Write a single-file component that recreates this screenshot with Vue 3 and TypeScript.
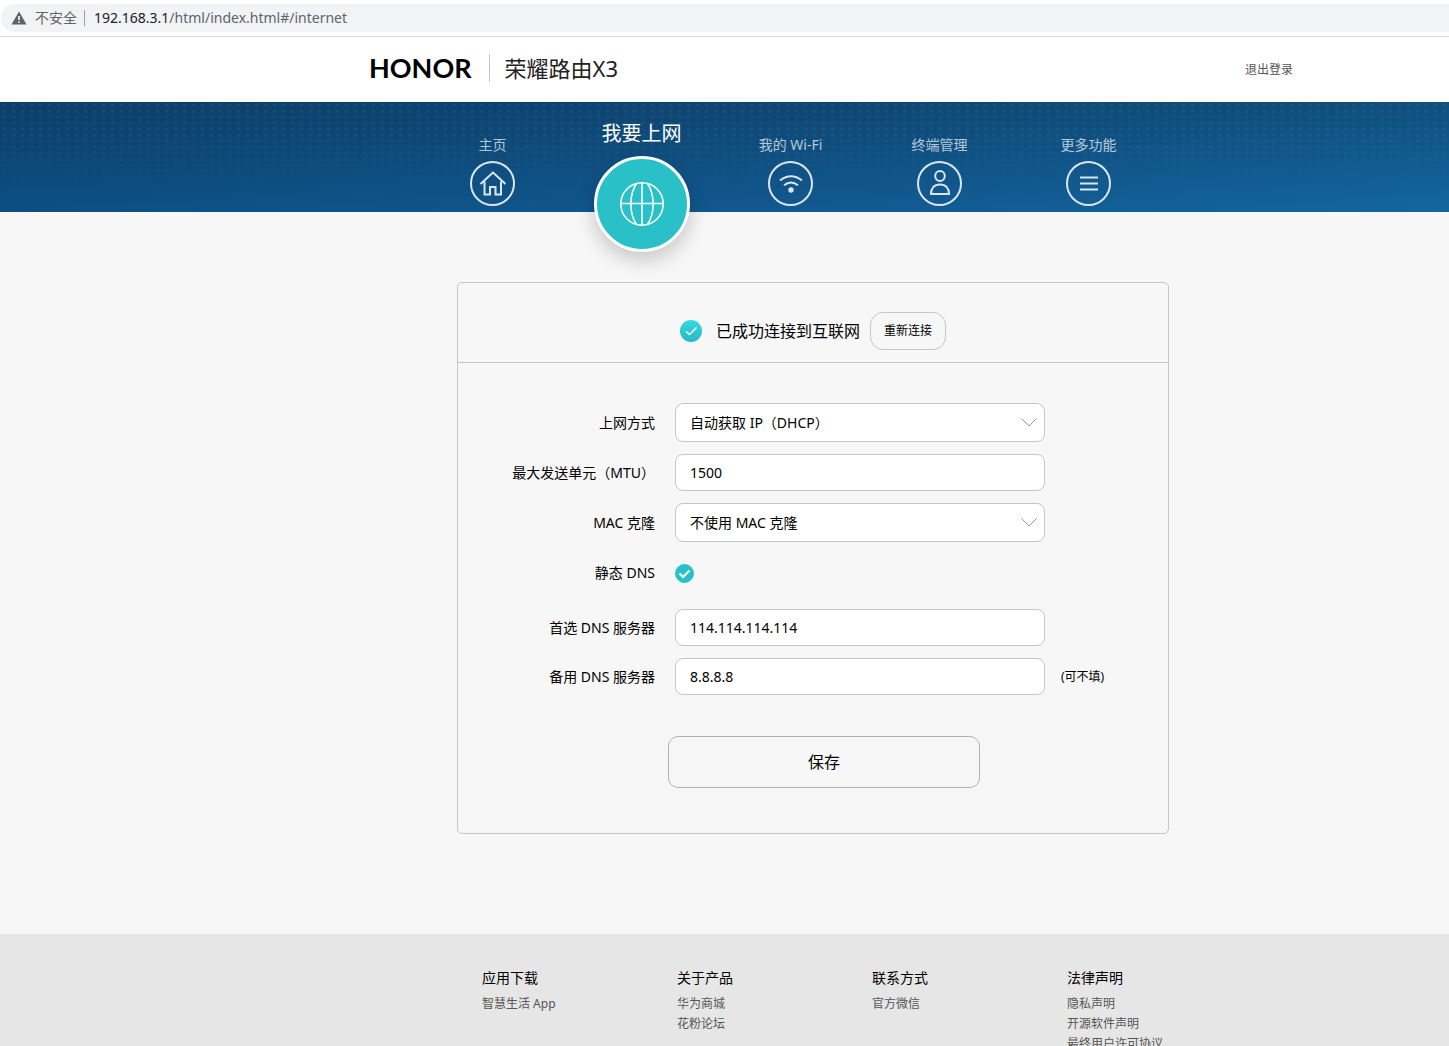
<script setup lang="ts">
import { ref } from 'vue'

interface NavItem {
  id: string
  label: string
  active?: boolean
}

interface FooterColumn {
  title: string
  links: string[]
}

const navItems: NavItem[] = [
  { id: 'home', label: '主页' },
  { id: 'internet', label: '我要上网', active: true },
  { id: 'wifi', label: '我的 Wi-Fi' },
  { id: 'device', label: '终端管理' },
  { id: 'more', label: '更多功能' },
]

const footerColumns: FooterColumn[] = [
  { title: '应用下载', links: ['智慧生活 App'] },
  { title: '关于产品', links: ['华为商城', '花粉论坛'] },
  { title: '联系方式', links: ['官方微信'] },
  { title: '法律声明', links: ['隐私声明', '开源软件声明', '最终用户许可协议'] },
]

const mode = ref('dhcp')
const mtu = ref('1500')
const macClone = ref('none')
const staticDns = ref(true)
const primaryDns = ref('114.114.114.114')
const secondaryDns = ref('8.8.8.8')
</script>

<template>
  <div class="window">
    <div class="toolbar">
      <div class="address">
        <svg class="warn" viewBox="0 0 16 14" aria-hidden="true">
          <path d="M8 0.5 15.5 13.5H0.5Z" fill="#5f6368" />
          <path d="M7.2 5h1.6v4H7.2zM7.2 10.2h1.6v1.6H7.2z" fill="#fff" />
        </svg>
        <span class="insecure">不安全</span>
        <span class="url"><b>192.168.3.1</b>/html/index.html#/internet</span>
      </div>
    </div>

    <div class="viewport">
      <header class="header">
        <div class="header-inner">
          <div class="brand">
            <span class="logo">HONOR</span>
            <h1 class="product">荣耀路由X3</h1>
          </div>
          <a class="logout" href="#/logout">退出登录</a>
        </div>
      </header>

      <nav class="banner">
        <div class="nav">
          <a
            v-for="item in navItems"
            :key="item.id"
            class="nav-item"
            :class="{ active: item.active }"
            :href="'#/' + item.id"
          >
            <span class="nav-label">{{ item.label }}</span>
            <span class="nav-circle">
              <svg v-if="item.id === 'home'" class="nav-icon" viewBox="0 0 44 44">
                <path d="M9.500 22 22 10.500 34.500 22M13.500 19.500v13h5.500v-7.500h5.500v7.500h5.500v-13" />
              </svg>
              <svg v-else-if="item.id === 'internet'" class="nav-icon globe" viewBox="0 0 44 44">
                <circle cx="22" cy="22" r="21.200" />
                <path d="M22 1v42M1 21.500h42M16.500 1.500c-7.500 11-7.500 30 0 41M27.500 1.500c7.500 11 7.500 30 0 41" />
              </svg>
              <svg v-else-if="item.id === 'wifi'" class="nav-icon" viewBox="0 0 44 44">
                <path d="M11 18.500q11-8.500 22 0M15 23.300q7-5.500 14 0" />
                <circle class="solid" cx="22" cy="28" r="2.700" />
              </svg>
              <svg v-else-if="item.id === 'device'" class="nav-icon" viewBox="0 0 44 44">
                <ellipse cx="22" cy="14" rx="4.800" ry="5" />
                <path d="M13 32c0-6 3.500-9.500 9-9.500s9 3.500 9 9.500z" />
              </svg>
              <svg v-else class="nav-icon" viewBox="0 0 44 44">
                <path d="M13 15.500h18M13 21.500h18M13 27.500h18" />
              </svg>
            </span>
          </a>
        </div>
      </nav>

      <main class="main">
        <section class="card">
          <div class="status">
            <svg class="status-icon" viewBox="0 0 22 22" aria-hidden="true">
              <defs>
                <linearGradient id="ok" x1="0" y1="0" x2="0" y2="1">
                  <stop offset="0" stop-color="#32dbde" />
                  <stop offset="1" stop-color="#27b7c4" />
                </linearGradient>
              </defs>
              <circle cx="11" cy="11" r="11" fill="url(#ok)" />
              <path d="M6 11.500 9.500 14.500 16.500 7.500" fill="none" stroke="#fff" stroke-width="1.500" />
            </svg>
            <span class="status-text">已成功连接到互联网</span>
            <button class="reconnect" type="button">重新连接</button>
          </div>

          <form class="form" @submit.prevent>
            <div class="row">
              <label for="mode">上网方式</label>
              <div class="select">
                <select id="mode" v-model="mode">
                  <option value="dhcp">自动获取 IP（DHCP）</option>
                </select>
                <svg class="arrow" viewBox="0 0 16 9"><path d="M0.500 0.500 8 8 15.500 0.500" /></svg>
              </div>
            </div>
            <div class="row">
              <label for="mtu">最大发送单元（MTU）</label>
              <input id="mtu" v-model="mtu" class="text" type="text" />
            </div>
            <div class="row">
              <label for="mac">MAC 克隆</label>
              <div class="select">
                <select id="mac" v-model="macClone">
                  <option value="none">不使用 MAC 克隆</option>
                </select>
                <svg class="arrow" viewBox="0 0 16 9"><path d="M0.500 0.500 8 8 15.500 0.500" /></svg>
              </div>
            </div>
            <div class="row check-row">
              <label for="static-dns">静态 DNS</label>
              <span class="check">
                <input id="static-dns" v-model="staticDns" type="checkbox" />
                <svg v-if="staticDns" viewBox="0 0 19 19"><path d="M4.500 9.500 8 13 14.500 6.500" /></svg>
              </span>
            </div>
            <div class="row">
              <label for="dns1">首选 DNS 服务器</label>
              <input id="dns1" v-model="primaryDns" class="text" type="text" />
            </div>
            <div class="row">
              <label for="dns2">备用 DNS 服务器</label>
              <input id="dns2" v-model="secondaryDns" class="text" type="text" />
              <span class="hint">(可不填)</span>
            </div>
            <button class="save" type="submit">保存</button>
          </form>
        </section>
      </main>

      <footer class="footer">
        <div class="footer-inner">
          <div v-for="column in footerColumns" :key="column.title" class="footer-column">
            <h2>{{ column.title }}</h2>
            <a v-for="link in column.links" :key="link" href="#/internet">{{ link }}</a>
          </div>
        </div>
      </footer>
    </div>
  </div>
</template>

<style>
body {
  margin: 0;
}
</style>

<style scoped>
* {
  box-sizing: border-box;
}

.window {
  display: flex;
  flex-direction: column;
  height: 100vh;
  background: #fff;
  color: #000;
  font: 400 14px/20px "Noto Sans", "Noto Sans CJK SC", sans-serif;
}

a {
  color: inherit;
  text-decoration: none;
}

button,
input,
select {
  margin: 0;
  color: inherit;
  font: inherit;
}

/* Browser address bar */
.toolbar {
  flex: none;
  padding: 4px 0 4px 1px;
  border-bottom: 1px solid #dadce0;
}

.address {
  display: flex;
  align-items: center;
  height: 28px;
  padding-left: 10px;
  border-radius: 14px 0 0 14px;
  background: #f1f3f4;
  color: #5f6368;
  white-space: nowrap;
}

.warn {
  width: 16px;
  height: 14px;
  margin-right: 8px;
}

.insecure {
  padding-right: 7px;
}

.url {
  padding-left: 9px;
  border-left: 1px solid #9aa0a6;
  line-height: 16px;
}

.url b {
  color: #202124;
  font-weight: inherit;
}

.viewport {
  flex: 1;
  min-height: 0;
  overflow-y: auto;
  scrollbar-width: none;
  background: #f7f7f7;
}

/* The sections share one axis, set right of the window centre */
.header,
.banner,
.main,
.footer {
  display: flex;
  justify-content: center;
  padding-left: 177px;
}

.header {
  background: #fff;
}

.header-inner {
  display: flex;
  align-items: center;
  width: 960px;
  height: 65px;
  padding-left: 36px;
}

.brand {
  display: flex;
  align-items: center;
  padding-bottom: 4px;
}

.logo {
  padding-right: 17px;
  font: 700 27px/28px Lato, sans-serif;
}

.product {
  margin: 0;
  padding-left: 15px;
  border-left: 1px solid #c4c4c4;
  color: #222;
  font-size: 22px;
  font-weight: inherit;
  line-height: 28px;
}

.logout {
  margin-left: auto;
  color: #555;
  font-size: 12px;
}

.banner {
  position: relative;
  height: 110px;
  background:
    linear-gradient(to bottom, rgba(8, 24, 40, 0.3), rgba(8, 24, 40, 0)),
    linear-gradient(to right, #0d4f83, #11588f 50%, #1366a1);
}

.banner::before {
  content: "";
  position: absolute;
  inset: 0;
  background: radial-gradient(ellipse 3px 2px at center, rgba(80, 150, 185, 0.18), transparent) 0 0 / 9px 6px;
  mask-image: linear-gradient(to bottom, #000 30%, transparent 80%);
}

.nav {
  position: relative;
  z-index: 1;
  display: grid;
  grid-template-columns: repeat(5, 149px);
  width: 790px;
}

.nav-item {
  display: flex;
  flex-direction: column;
  align-items: center;
  gap: 6px;
  padding-top: 33px;
  color: rgba(255, 255, 255, 0.7);
  white-space: nowrap;
}

.nav-circle {
  display: flex;
  flex: none;
  align-items: center;
  justify-content: center;
  width: 45px;
  height: 45px;
  border: 2px solid #dbe5ee;
  border-radius: 50%;
}

.nav-icon {
  flex: none;
  width: 44px;
  height: 44px;
  fill: none;
  stroke: #dbe5ee;
  stroke-width: 2;
}

.nav-icon .solid {
  fill: #dbe5ee;
  stroke: none;
}

.nav-item.active {
  gap: 8px;
  height: 150px;
  padding-top: 18px;
  color: #fff;
  font-size: 20px;
  line-height: 28px;
}

.active .nav-circle {
  width: 96px;
  height: 96px;
  border: 3px solid #fff;
  background: #29c0c8;
  box-shadow: 0 8px 20px rgba(0, 0, 0, 0.2);
}

.globe {
  stroke: #fff;
  stroke-width: 1.6;
}

.main {
  padding-top: 70px;
  padding-bottom: 100px;
}

.card {
  width: 712px;
  border: 1px solid #c6c6c6;
  border-radius: 5px;
}

.status {
  display: flex;
  align-items: center;
  justify-content: center;
  padding: 29px 0 12px;
  border-bottom: 1px solid #c6c6c6;
}

.status-icon {
  width: 22px;
  height: 22px;
  margin-right: 14px;
}

.status-text {
  margin-right: 10px;
  font-size: 16px;
}

.reconnect {
  width: 76px;
  height: 38px;
  padding: 0;
  border: 1px solid #c6c6c6;
  border-radius: 13px;
  background: transparent;
  font-size: 12px;
}

.form {
  display: flex;
  flex-direction: column;
  gap: 12px;
  padding: 40px 0 45px;
}

.row {
  display: grid;
  grid-template-columns: 197px 370px auto;
  column-gap: 20px;
  align-items: center;
  justify-content: start;
}

.row label {
  text-align: right;
  white-space: nowrap;
}

.text,
.select select {
  display: block;
  width: 100%;
  padding: 0 14px;
  border: 1px solid #c6c6c6;
  border-radius: 8px;
  outline: none;
  background: #fff;
}

.text {
  height: 37px;
}

.select {
  position: relative;
}

.select select {
  height: 39px;
  appearance: none;
}

.arrow {
  position: absolute;
  top: 15px;
  right: 8px;
  width: 16px;
  height: 9px;
  fill: none;
  stroke: #999;
  pointer-events: none;
}

.check-row {
  height: 38px;
  margin-bottom: 5px;
}

.check {
  position: relative;
  width: 19px;
  height: 19px;
}

.check input {
  display: block;
  width: 19px;
  height: 19px;
  border: 1px solid #29c0c8;
  border-radius: 50%;
  appearance: none;
}

.check input:checked {
  background: #29c0c8;
}

.check svg {
  position: absolute;
  inset: 0;
  fill: none;
  stroke: #fff;
  stroke-width: 2;
  pointer-events: none;
}

.hint {
  margin-left: -4px;
  font-size: 12px;
}

.save {
  width: 312px;
  height: 52px;
  margin-top: 29px;
  margin-left: 210px;
  border: 1px solid #b2b2b2;
  border-radius: 10px;
  background: transparent;
  font-size: 16px;
}

.footer {
  background: #e6e6e6;
}

.footer-inner {
  display: grid;
  grid-template-columns: repeat(4, 195px);
  width: 712px;
  padding: 34px 0 40px 25px;
}

.footer-column {
  display: flex;
  flex-direction: column;
  align-items: flex-start;
  color: #555;
  font-size: 12px;
}

.footer-column h2 {
  margin: 0 0 6px;
  color: #000;
  font-size: 14px;
  font-weight: inherit;
}
</style>
